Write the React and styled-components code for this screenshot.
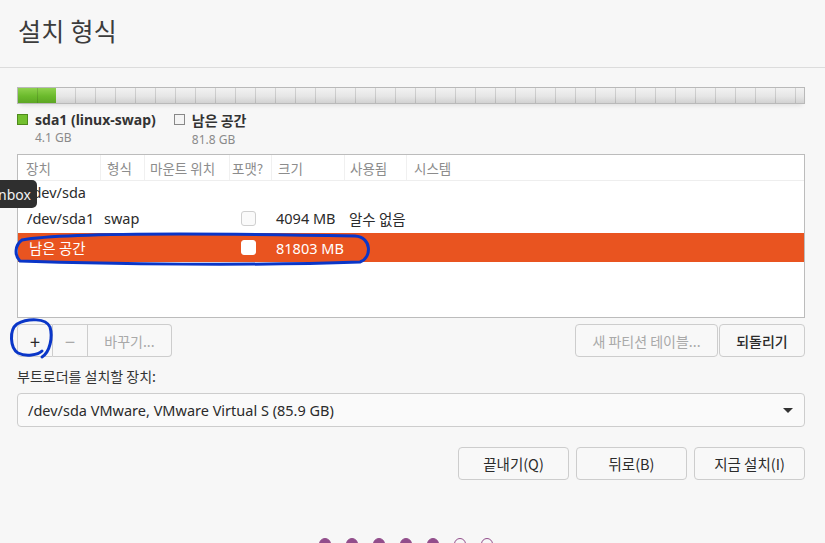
import React from "react";
import styled, { createGlobalStyle } from "styled-components";

const Global = createGlobalStyle`
  html, body { margin: 0; padding: 0; }
  body {
    background: #f7f7f7;
    font-family: "Noto Sans", "Noto Sans CJK KR", sans-serif;
    color: #2e2e2e;
    overflow: hidden;
  }
  #root { width: 825px; height: 543px; }
`;

const Page = styled.div`
  position: relative;
  width: 825px;
  height: 543px;
  overflow: hidden;
  background: #f7f7f7;
`;

const Header = styled.div`
  height: 68px;
  box-sizing: border-box;
  border-bottom: 1px solid #dcdcdc;
  padding: 12px 18px 0;
`;

const Title = styled.h1`
  margin: 0;
  font-family: "Noto Sans CJK KR", sans-serif;
  font-weight: 400;
  font-size: 25px;
  color: #3c3c3c;
  letter-spacing: 0.3px;
`;

const Body = styled.div`
  padding: 19px 20px 0 17px;
  display: flex;
  flex-direction: column;
`;

const Bar = styled.div`
  height: 17px;
  box-sizing: border-box;
  border: 1px solid #b9b9b9;
  display: flex;
  position: relative;
  box-shadow: 0 4px 5px -3px rgba(0,0,0,0.12);
`;

const BarSeg = styled.div`
  height: 100%;
  background-image:
    repeating-linear-gradient(to right, transparent 0 19px, rgba(0,0,0,0.13) 19px 20px),
    linear-gradient(to bottom, ${p => p.$top} 0%, ${p => p.$mid} 55%, ${p => p.$bot} 100%);
  flex: ${p => p.$flex};
`;

const Legend = styled.div`
  display: flex;
  gap: 18px;
  margin-top: 7px;
  height: 35px;
`;

const LegendItem = styled.div`
  display: grid;
  grid-template-columns: 11px auto;
  column-gap: 7px;
  align-items: start;
`;

const Swatch = styled.div`
  width: 11px;
  height: 11px;
  box-sizing: border-box;
  margin-top: 3px;
  background: ${p => p.$color};
  border: 1px solid ${p => p.$border};
`;

const LegendName = styled.div`
  font-weight: 700;
  font-size: 14px;
  line-height: 17px;
  color: #333;
  font-family: ${p => (p.$ko ? '"Noto Sans CJK KR", sans-serif' : 'inherit')};
  margin-top: ${p => (p.$ko ? 1 : 0)}px;
`;

const LegendSize = styled.div`
  grid-column: 2;
  font-size: 12px;
  line-height: 13px;
  color: #8a8a8a;
  margin-top: ${p => p.$mt || 0}px;
`;

const Table = styled.div`
  margin-top: 8px;
  height: 164px;
  box-sizing: border-box;
  border: 1px solid #bcbcbc;
  background: #fff;
  display: flex;
  flex-direction: column;
`;

const cols = "82px 44px 85px 42px 73px 62px 1fr";

const HeadRow = styled.div`
  display: grid;
  grid-template-columns: ${cols};
  height: 25px;
  border-bottom: 1px solid #eeeeee;
  font-family: "Noto Sans CJK KR", sans-serif;
  font-size: 13.5px;
  color: #8c8c8c;
`;

const HeadCell = styled.div`
  display: flex;
  align-items: center;
  padding-left: ${p => p.$pl}px;
  border-left: ${p => (p.$first ? "none" : "1px solid #f0f0f0")};
  white-space: nowrap;
`;

const Row = styled.div`
  display: grid;
  grid-template-columns: ${cols};
  height: ${p => p.$h || 27}px;
  background: ${p => (p.$selected ? "#e95420" : "transparent")};
  color: ${p => (p.$selected ? "#fff" : "#2b2b2b")};
  font-size: 14.5px;
`;

const Cell = styled.div`
  display: flex;
  align-items: center;
  padding-left: ${p => p.$pl || 0}px;
  white-space: nowrap;
  font-family: ${p => (p.$ko ? '"Noto Sans CJK KR", sans-serif' : 'inherit')};
`;

const Check = styled.div`
  width: 15px;
  height: 15px;
  box-sizing: border-box;
  border-radius: 3px;
  border: 1px solid ${p => (p.$selected ? "#fff" : "#cfcfcf")};
  background: ${p => (p.$selected ? "#fff" : "#fafafa")};
  margin-left: 12px;
`;

const Toolbar = styled.div`
  display: flex;
  justify-content: space-between;
  margin-top: 6px;
`;

const Group = styled.div`
  display: flex;
`;

const Btn = styled.div`
  height: 33px;
  box-sizing: border-box;
  display: flex;
  align-items: center;
  justify-content: center;
  width: ${p => p.$w}px;
  border: 1px solid #cdcdcd;
  background: #f8f8f8;
  font-family: "Noto Sans CJK KR", sans-serif;
  font-size: ${p => p.$fs || 14}px;
  font-weight: ${p => (p.$bold ? 500 : 400)};
  color: ${p => (p.$disabled ? "#a9a9a9" : "#2b2b2b")};
  border-radius: ${p => p.$radius || "4px"};
  margin-left: ${p => p.$ml || 0}px;
  ${p => p.$noLeft && "border-left: none;"}
`;

const Label = styled.div`
  margin-top: 8px;
  font-family: "Noto Sans CJK KR", sans-serif;
  font-size: 14px;
  color: #333;
  height: 28px;
  line-height: 22px;
`;

const Select = styled.div`
  height: 34px;
  box-sizing: border-box;
  border: 1px solid #cdcdcd;
  border-radius: 4px;
  background: #fafafa;
  display: flex;
  align-items: center;
  justify-content: space-between;
  padding: 0 11px 0 10px;
  font-size: 14.5px;
  color: #2b2b2b;
`;

const Arrow = styled.div`
  width: 0;
  height: 0;
  border-left: 5px solid transparent;
  border-right: 5px solid transparent;
  border-top: 5px solid #333;
`;

const Footer = styled.div`
  display: flex;
  justify-content: flex-end;
  gap: 7px;
  margin-top: 20px;
`;

const Dots = styled.div`
  position: absolute;
  left: 319px;
  top: 538px;
  display: flex;
  gap: 15px;
`;

const Dot = styled.div`
  width: 12px;
  height: 12px;
  box-sizing: border-box;
  border-radius: 50%;
  background: ${p => (p.$on ? "#924d8b" : "transparent")};
  border: 1.5px solid #924d8b;
`;

const Tooltip = styled.div`
  position: absolute;
  left: -7px;
  top: 180px;
  height: 28px;
  padding: 0 6px 0 5px;
  border-radius: 5px;
  background: #2f2f2f;
  color: #f2f2f2;
  font-size: 14px;
  display: flex;
  align-items: center;
`;

const Annotation = styled.svg`
  position: absolute;
  left: 0;
  top: 0;
  pointer-events: none;
`;

export default function App() {
  return (
    <Page>
      <Global />
      <Header>
        <Title>설치 형식</Title>
      </Header>
      <Body>
        <Bar>
          <BarSeg $flex="0 0 38px" $top="#8ed14d" $mid="#6bba2c" $bot="#5da624" />
          <BarSeg $flex="1" $top="#f2f2f2" $mid="#e6e6e6" $bot="#d2d2d2" />
        </Bar>
        <Legend>
          <LegendItem>
            <Swatch $color="#73c02f" $border="#4e8a1c" />
            <LegendName>sda1 (linux-swap)</LegendName>
            <LegendSize $mt={1}>4.1 GB</LegendSize>
          </LegendItem>
          <LegendItem>
            <Swatch $color="#f4f4f4" $border="#888" />
            <LegendName $ko>남은 공간</LegendName>
            <LegendSize $mt={4}>81.8 GB</LegendSize>
          </LegendItem>
        </Legend>
        <Table>
          <HeadRow>
            <HeadCell $first $pl={8}>장치</HeadCell>
            <HeadCell $pl={6}>형식</HeadCell>
            <HeadCell $pl={5}>마운트 위치</HeadCell>
            <HeadCell $pl={2}>포맷?</HeadCell>
            <HeadCell $pl={6}>크기</HeadCell>
            <HeadCell $pl={5}>사용됨</HeadCell>
            <HeadCell $pl={7}>시스템</HeadCell>
          </HeadRow>
          <Row $h={22}>
            <Cell $pl={9}>/dev/sda</Cell>
          </Row>
          <Row $h={30}>
            <Cell $pl={9}>/dev/sda1</Cell>
            <Cell $pl={4}>swap</Cell>
            <Cell />
            <Cell><Check /></Cell>
            <Cell $pl={5}>4094 MB</Cell>
            <Cell $pl={5} $ko>알수 없음</Cell>
            <Cell />
          </Row>
          <Row $h={29} $selected>
            <Cell $pl={11} $ko>남은 공간</Cell>
            <Cell />
            <Cell />
            <Cell><Check $selected /></Cell>
            <Cell $pl={5}>81803 MB</Cell>
            <Cell />
            <Cell />
          </Row>
        </Table>
        <Toolbar>
          <Group>
            <Btn $w={36} $radius="4px 0 0 4px" $fs={18}>+</Btn>
            <Btn $w={35} $radius="0" $noLeft $disabled $fs={18}>−</Btn>
            <Btn $w={84} $radius="0 4px 4px 0" $noLeft $disabled>바꾸기...</Btn>
          </Group>
          <Group>
            <Btn $w={143} $disabled>새 파티션 테이블...</Btn>
            <Btn $w={86} $ml={1} $bold>되돌리기</Btn>
          </Group>
        </Toolbar>
        <Label>부트로더를 설치할 장치:</Label>
        <Select>
          <span>/dev/sda VMware, VMware Virtual S (85.9 GB)</span>
          <Arrow />
        </Select>
        <Footer>
          <Btn $w={111} $fs={14.5}>끝내기(Q)</Btn>
          <Btn $w={111} $fs={14.5}>뒤로(B)</Btn>
          <Btn $w={111} $fs={14.5}>지금 설치(I)</Btn>
        </Footer>
      </Body>
      <Tooltip>nbox</Tooltip>
      <Dots>
        <Dot $on />
        <Dot $on />
        <Dot $on />
        <Dot $on />
        <Dot $on />
        <Dot />
        <Dot />
      </Dots>
      <Annotation width="825" height="543" viewBox="0 0 825 543">
        <path
          d="M22 240 C 60 233, 200 233, 355 236 C 372 237, 372 258, 360 262 C 250 266, 110 264, 20 261 C 14 255, 15 245, 22 240 Z"
          fill="none"
          stroke="#0a36c8"
          strokeWidth="3"
          strokeLinecap="round"
        />
        <path
          d="M42 357 C 50 352, 53 337, 50 327 C 46 318, 28 318, 17 324 C 9 330, 10 348, 18 353 C 26 357, 38 355, 42 351"
          fill="none"
          stroke="#0a36c8"
          strokeWidth="3"
          strokeLinecap="round"
        />
      </Annotation>
    </Page>
  );
}
